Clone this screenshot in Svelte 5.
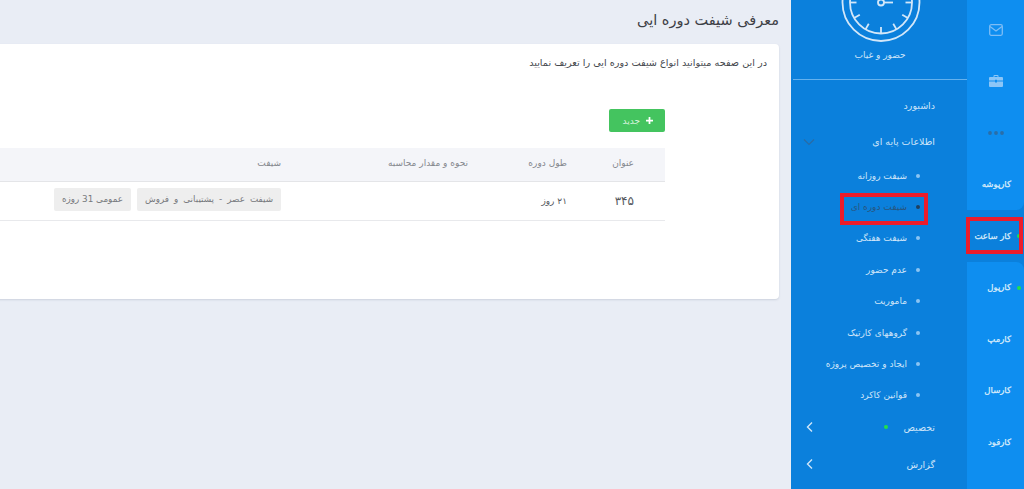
<script>
  const rail = [
    { icon: 'mail' }, { icon: 'case' }, { icon: 'dots' },
    { label: 'کارپوشه' }, { label: 'کار ساعت', active: true, dot: true }, { label: 'کارپول', dot: true },
    { label: 'کارمپ' }, { label: 'کارسال' }, { label: 'کارفود' }
  ];
  const subs = ['شیفت روزانه', 'شیفت دوره ای', 'شیفت هفتگی', 'عدم حضور', 'ماموریت', 'گروههای کارتیک', 'ایجاد و تخصیص پروژه', 'قوانین کاکرد'];
  const ticks = Array.from({ length: 12 }, (_, i) => {
    const a = (i * 30 * Math.PI) / 180;
    return { x1: 31 * Math.cos(a), y1: 31 * Math.sin(a), x2: 24.5 * Math.cos(a), y2: 24.5 * Math.sin(a) };
  });
</script>

<div class="page" dir="rtl">
  <nav class="rail">
    <div class="rail-top"></div>
    {#each rail as item, i}
      <div class="rail-item" class:active={item.active} class:before-active={rail[i + 1]?.active} class:after-active={rail[i - 1]?.active}>
        {#if item.icon === 'mail'}
          <svg width="14" height="12" viewBox="0 0 14 12" fill="none" stroke="#7dbdf5" stroke-width="1.3"><rect x="0.7" y="0.7" width="12.6" height="10.6" rx="1.5"/><path d="M1 2.5 7 7l6-4.5"/></svg>
        {:else if item.icon === 'case'}
          <svg width="14" height="12" viewBox="0 0 14 12" fill="#8cc6f7"><path d="M4.5 2V1q0-1 1-1h3q1 0 1 1v1H13q1 0 1 1v2.600H8v-.8H6v.8H0V3q0-1 1-1zM5.500 1v1h3V1zM0 6.400h6v1h2v-1h6V11q0 1-1 1H1q-1 0-1-1z"/></svg>
        {:else if item.icon === 'dots'}
          <svg width="16" height="4" viewBox="0 0 16 4" fill="#2a6ea8"><circle cx="2" cy="2" r="1.900"/><circle cx="8" cy="2" r="1.900"/><circle cx="14" cy="2" r="1.900"/></svg>
        {:else}
          <span class="rail-label">{item.label}</span>
          {#if item.dot}<span class="rail-dot"></span>{/if}
          {#if item.active}<span class="mark rail-mark"></span>{/if}
        {/if}
      </div>
    {/each}
    <div class="rail-fill"></div>
  </nav>

  <aside class="side">
    <svg class="clock" width="80" height="43" viewBox="-40 -2.500 80 43" fill="none" stroke="#d3e7f9" stroke-width="1.800">
      <circle r="38.500"/>
      <circle r="31"/>
      {#each ticks as t}<line x1={t.x1} y1={t.y1} x2={t.x2} y2={t.y2}/>{/each}
      <circle r="3"/>
      <line x1="3" y1="0" x2="12" y2="0"/>
    </svg>
    <div class="brand">حضور و غیاب</div>
    <ul class="menu">
      <li class="top first">داشبورد</li>
      <li class="top open">اطلاعات پایه ای
        <svg class="chev down" width="12" height="7" viewBox="0 0 12 7" fill="none" stroke="#2a6ba5" stroke-width="1.200"><path d="M1 1l5 5 5-5"/></svg>
      </li>
      {#each subs as s, i}
        <li class="sub" class:current={i === 1}>
          <span class="bullet"></span>{s}
          {#if i === 1}<span class="mark sub-mark"></span>{/if}
        </li>
      {/each}
      <li class="top alloc">تخصیص<span class="menu-dot"></span>
        <svg class="chev" width="7" height="11" viewBox="0 0 7 11" fill="none" stroke="#cfe5f9" stroke-width="1.400"><path d="M6 1 1.500 5.500 6 10"/></svg>
      </li>
      <li class="top report">گزارش
        <svg class="chev" width="7" height="11" viewBox="0 0 7 11" fill="none" stroke="#cfe5f9" stroke-width="1.400"><path d="M6 1 1.500 5.500 6 10"/></svg>
      </li>
    </ul>
  </aside>

  <main class="main">
    <h1 class="title">معرفی شیفت دوره ایی</h1>
    <section class="card">
      <p class="desc">در این صفحه میتوانید انواع شیفت دوره ایی را تعریف نمایید</p>
      <button class="new">
        <svg width="7" height="7" viewBox="0 0 8 8" fill="#fff"><path d="M3 0h2v3h3v2H5v3H3V5H0V3h3z"/></svg>
        جدید
      </button>
      <table>
        <colgroup><col class="c1"/><col class="c2"/><col class="c3"/><col/></colgroup>
        <thead>
          <tr><th>عنوان</th><th>طول دوره</th><th>نحوه و مقدار محاسبه</th><th>شیفت</th></tr>
        </thead>
        <tbody>
          <tr>
            <td class="count">۳۴۵</td>
            <td class="days">۲۱ روز</td>
            <td></td>
            <td><div class="tags"><span class="tag wide">شیفت عصر - پشتیبانی و فروش</span><span class="tag">عمومی 31 روزه</span></div></td>
          </tr>
        </tbody>
      </table>
    </section>
  </main>
</div>

<style>
  :global(body) { margin: 0; background: #e9edf5; }
  .page {
    display: flex;
    width: 1024px;
    height: 489px;
    overflow: hidden;
    font-family: "DejaVu Sans", sans-serif;
    background: #e9edf5;
  }
  .rail {
    flex: 0 0 57px;
    display: flex;
    flex-direction: column;
    background: #0b80dc;
  }
  .rail-top { height: 4px; background: #0e8ef0; }
  .rail-fill { flex: 1; background: #0e8ef0; }
  .rail-item {
    position: relative;
    height: 51.500px;
    display: flex;
    align-items: center;
    justify-content: center;
    background: #0e8ef0;
  }
  .rail-item.active { background: #0b80dc; }
  .rail-item.before-active { border-bottom-right-radius: 8px; }
  .rail-item.after-active { border-top-right-radius: 8px; }
  .rail-label {
    width: 100%;
    padding-right: 13px;
    box-sizing: border-box;
    font-size: 8.500px;
    -webkit-text-stroke: 0.25px #dcedfb;
    color: #dcedfb;
    white-space: nowrap;
  }
  .rail-dot {
    position: absolute;
    right: 3px;
    top: 50%;
    margin-top: -1.500px;
    width: 4px;
    height: 4px;
    border-radius: 50%;
    background: #22e04a;
  }
  .mark { position: absolute; border: 4px solid #ec1c2b; box-sizing: border-box; }
  .rail-mark { top: 7px; bottom: 8px; right: 1px; left: -1px; }

  .side {
    flex: 0 0 176px;
    background: #0b80dc;
    display: flex;
    flex-direction: column;
    align-items: stretch;
  }
  .clock { display: block; align-self: center; margin-left: 3px; }
  .brand {
    margin-top: 5px;
    height: 31px;
    border-bottom: 1px solid #64b1ee;
    margin-left: 2px;
    text-align: center;
    font-size: 9px;
    line-height: 14px;
    color: #cfe5f9;
  }
  .menu { list-style: none; margin: 0; padding: 0; color: #cfe5f9; font-size: 9.500px; }
  .menu li { position: relative; display: flex; align-items: center; }
  .top { height: 36px; padding-right: 32px; }
  .top.first { margin-top: 7px; }
  .top.open { height: 37px; }
  .sub { height: 31.400px; padding-right: 60px; font-size: 9px; }
  .sub.current { color: #27567f; }
  .bullet {
    position: absolute;
    right: 47px;
    top: 50%;
    margin-top: -2px;
    width: 4px;
    height: 4px;
    border-radius: 50%;
    background: #8cc4f3;
  }
  .current .bullet { background: #1f3f5f; }
  .sub-mark { top: 2px; bottom: -2px; right: 39px; left: 49px; }
  .chev { position: absolute; left: 15px; top: 50%; transform: translateY(-50%); }
  .chev.down { left: 12px; }
  .menu-dot {
    position: absolute;
    right: 79px;
    top: 50%;
    width: 4px;
    height: 4px;
    margin-top: -2px;
    border-radius: 50%;
    background: #22e04a;
  }
  .alloc { margin-top: -2px; }
  .report { margin-top: 1px; }

  .main { flex: 1 1 0; min-width: 0; overflow: hidden; padding-right: 12px; box-sizing: border-box; }
  .title {
    margin: 0;
    height: 44px;
    line-height: 40px;
    font-size: 14.500px;
    font-weight: 400;
    color: #3d4046;
    white-space: nowrap;
  }
  .card {
    width: 820px;
    height: 255px;
    box-sizing: border-box;
    padding: 12px 12px 0 0;
    background: #fff;
    border-radius: 4px;
    box-shadow: 0 1px 2px rgba(120, 130, 150, .25);
  }
  .desc { margin: 0; font-size: 9.700px; line-height: 14px; color: #45484e; white-space: nowrap; }
  .new {
    display: flex;
    align-items: center;
    gap: 6px;
    margin: 39px 102px 0 0;
    width: 56px;
    height: 23px;
    padding: 0 12px 0 0;
    border: 0;
    border-radius: 2px;
    background: #44c45f;
    color: #d8f3de;
    font: 9px "DejaVu Sans", sans-serif;
  }
  table {
    width: 808px;
    margin: 16px 102px 0 0;
    border-collapse: collapse;
    table-layout: fixed;
  }
  .c1 { width: 67px; }
  .c2 { width: 99px; }
  .c3 { width: 187px; }
  th {
    height: 33px;
    padding: 0 31px 3px 0;
    box-sizing: border-box;
    background: #f4f5f9;
    border-bottom: 1px solid #e4e5e8;
    text-align: right;
    font-size: 9px;
    font-weight: 400;
    color: #85888e;
  }
  td {
    height: 38px;
    padding: 0 31px 0 0;
    border-bottom: 1px solid #e8e9ec;
    font-size: 10px;
    color: #55585e;
    white-space: nowrap;
  }
  td.count { font-size: 12px; }
  td.days { font-size: 9px; }
  .tags { display: flex; gap: 6px; margin-top: -2px; }
  .tag {
    height: 23px;
    line-height: 23px;
    padding: 0 8px;
    border-radius: 2px;
    background: #eee;
    font-size: 8.800px;
    color: #77797d;
  }
  .tag.wide { word-spacing: 2.200px; }
</style>
